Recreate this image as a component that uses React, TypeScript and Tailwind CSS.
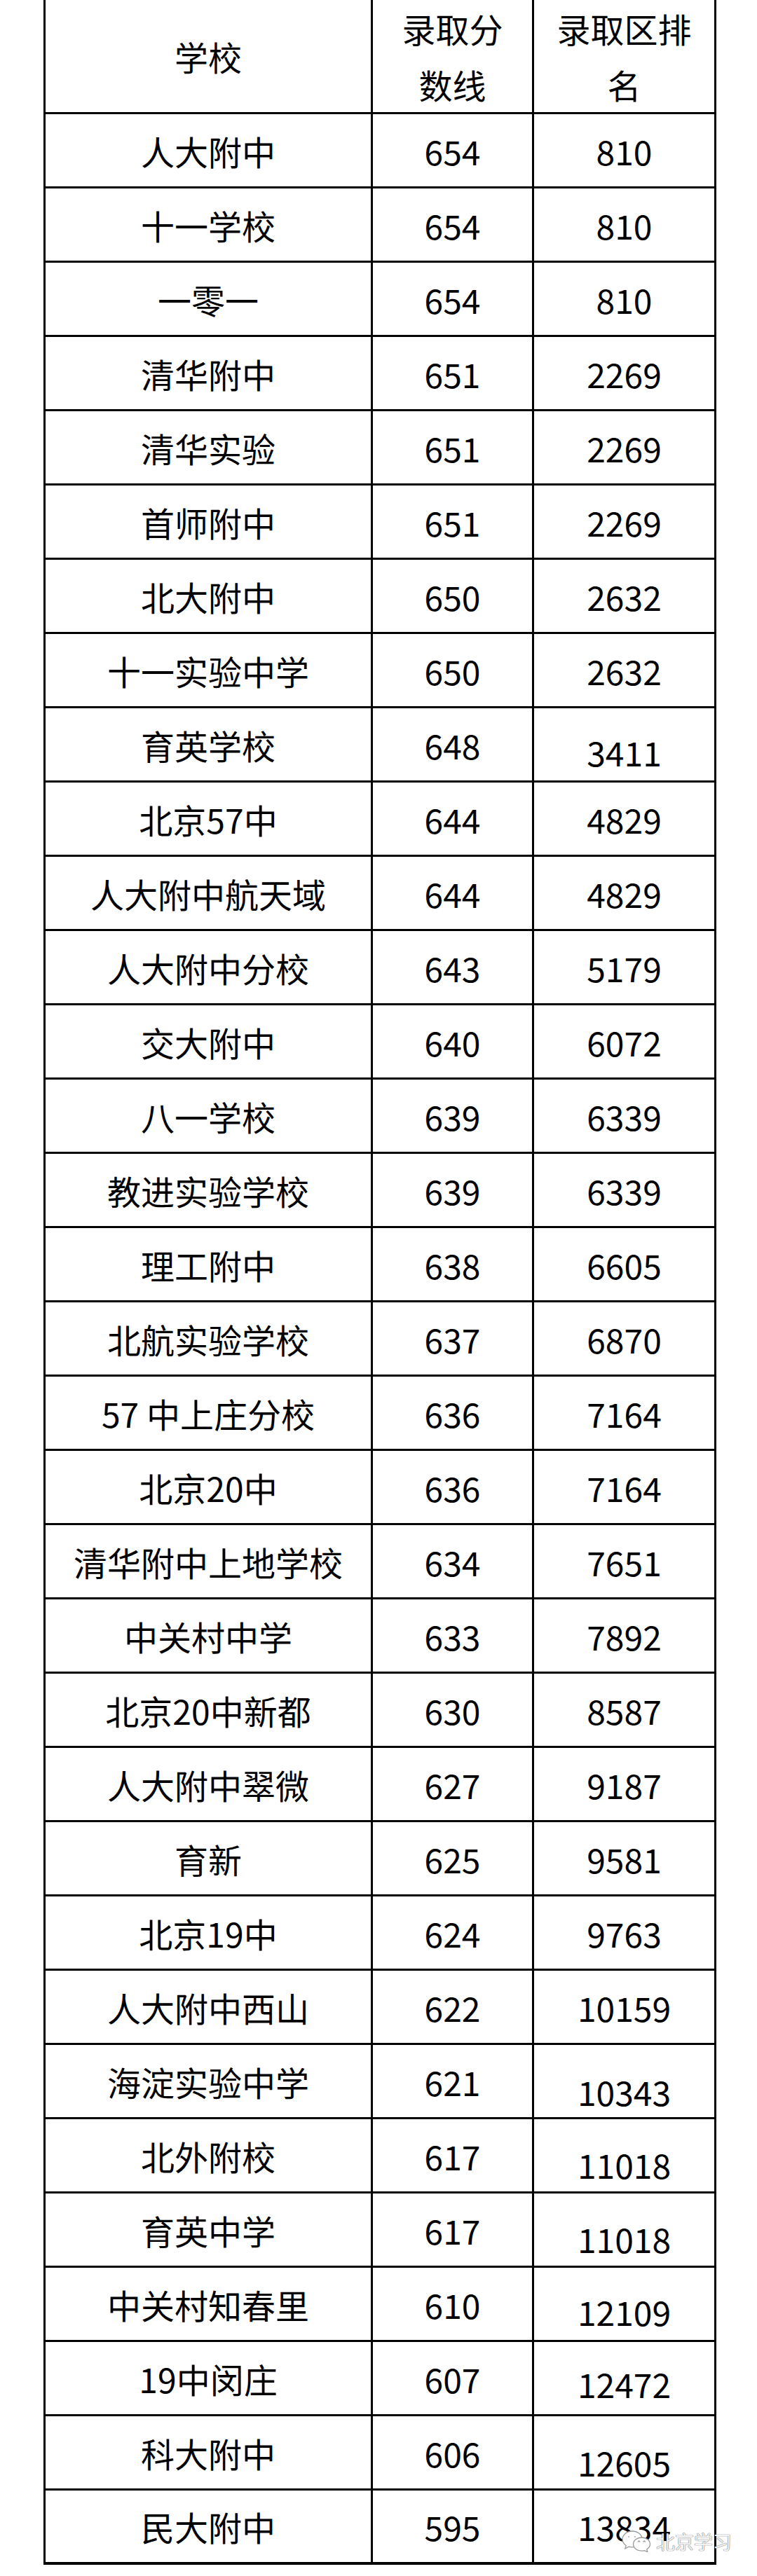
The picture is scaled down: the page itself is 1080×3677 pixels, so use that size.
import React from "react";

type Row = { name: string; score: string; rank: string; rankPad?: string };

// rankPad nudges a few 录取区排名 values down, the way the source image has them
const rows: Row[] = [
  { name: "人大附中", score: "654", rank: "810" },
  { name: "十一学校", score: "654", rank: "810" },
  { name: "一零一", score: "654", rank: "810" },
  { name: "清华附中", score: "651", rank: "2269" },
  { name: "清华实验", score: "651", rank: "2269" },
  { name: "首师附中", score: "651", rank: "2269" },
  { name: "北大附中", score: "650", rank: "2632" },
  { name: "十一实验中学", score: "650", rank: "2632" },
  { name: "育英学校", score: "648", rank: "3411", rankPad: "pt-[20px]" },
  { name: "北京57中", score: "644", rank: "4829" },
  { name: "人大附中航天域", score: "644", rank: "4829" },
  { name: "人大附中分校", score: "643", rank: "5179" },
  { name: "交大附中", score: "640", rank: "6072" },
  { name: "八一学校", score: "639", rank: "6339" },
  { name: "教进实验学校", score: "639", rank: "6339" },
  { name: "理工附中", score: "638", rank: "6605" },
  { name: "北航实验学校", score: "637", rank: "6870" },
  { name: "57 中上庄分校", score: "636", rank: "7164" },
  { name: "北京20中", score: "636", rank: "7164" },
  { name: "清华附中上地学校", score: "634", rank: "7651" },
  { name: "中关村中学", score: "633", rank: "7892" },
  { name: "北京20中新都", score: "630", rank: "8587" },
  { name: "人大附中翠微", score: "627", rank: "9187" },
  { name: "育新", score: "625", rank: "9581" },
  { name: "北京19中", score: "624", rank: "9763" },
  { name: "人大附中西山", score: "622", rank: "10159" },
  { name: "海淀实验中学", score: "621", rank: "10343", rankPad: "pt-[28px]" },
  { name: "北外附校", score: "617", rank: "11018", rankPad: "pt-[24px]" },
  { name: "育英中学", score: "617", rank: "11018", rankPad: "pt-[24px]" },
  { name: "中关村知春里", score: "610", rank: "12109", rankPad: "pt-[20px]" },
  { name: "19中闵庄", score: "607", rank: "12472", rankPad: "pt-[14px]" },
  { name: "科大附中", score: "606", rank: "12605", rankPad: "pt-[26px]" },
  { name: "民大附中", score: "595", rank: "13834" },
];

const WeChatMark: React.FC = () => (
  <svg width="44" height="32" viewBox="0 0 44 32" fill="none">
    <path
      d="M16 2C8.3 2 2 7.2 2 13.6c0 3.6 2 6.8 5.2 8.9L5.8 27l5.2-2.9c1.6.5 3.3.7 5 .7 7.7 0 14-5.2 14-11.6S23.7 2 16 2z"
      fill="#ffffff"
      stroke="#9a9a9a"
      strokeWidth="1.3"
    />
    <path
      d="M29.5 11c-6.6 0-12 4.3-12 9.6s5.4 9.6 12 9.6c1.4 0 2.8-.2 4-.6l4.4 2.2-1.1-3.8c2.8-1.8 4.7-4.4 4.7-7.4 0-5.3-5.4-9.6-12-9.6z"
      fill="#ffffff"
      stroke="#9a9a9a"
      strokeWidth="1.3"
    />
    <path d="M24 17.5l1.6-1.6 1.6 1.6M31.5 17.5l1.6-1.6 1.6 1.6" stroke="#9a9a9a" strokeWidth="1.1" />
    <circle cx="11" cy="10" r="1" fill="#b0b0b0" />
    <circle cx="20" cy="10" r="1" fill="#b0b0b0" />
  </svg>
);

export default function App() {
  return (
    <div className="relative h-[3677px] w-[1080px] bg-white text-black [font-family:'Noto_Sans_CJK_SC','Noto_Sans',sans-serif]">
      <div className="ml-[62px] w-[960px] border-l-[3px] border-black">
        {/* header */}
        <div className="grid h-[163px] grid-cols-[467px_230px_260px] border-b-[3px] border-black text-[48px] leading-[80px]">
          <div className="flex items-center justify-center border-r-[3px] border-black">学校</div>
          <div className="flex items-center justify-center border-r-[3px] border-black text-center">
            <span>
              录取分
              <br />
              数线
            </span>
          </div>
          <div className="flex items-center justify-center border-r-[3px] border-black text-center">
            <span>
              录取区排
              <br />
              名
            </span>
          </div>
        </div>

        {rows.map((r, i) => (
          <div
            key={i}
            className={`grid h-[106px] grid-cols-[467px_230px_260px] border-black text-[48px] leading-none ${
              i === rows.length - 1 ? "border-b-[4px]" : "border-b-[3px]"
            }`}
          >
            <div className="flex items-center justify-center whitespace-pre border-r-[3px] border-black">{r.name}</div>
            <div className="flex items-center justify-center border-r-[3px] border-black">{r.score}</div>
            <div className={`flex items-center justify-center border-r-[3px] border-black ${r.rankPad ?? ""}`}>
              {r.rank}
            </div>
          </div>
        ))}
      </div>

      {/* watermark */}
      <div className="absolute left-[886px] top-[3611px] flex items-center gap-[6px]">
        <WeChatMark />
        <span className="text-[27px] leading-none text-[#f4f4f4] [text-shadow:0_0_1px_#555,0_0_1px_#555]">
          北京学习
        </span>
      </div>
    </div>
  );
}
